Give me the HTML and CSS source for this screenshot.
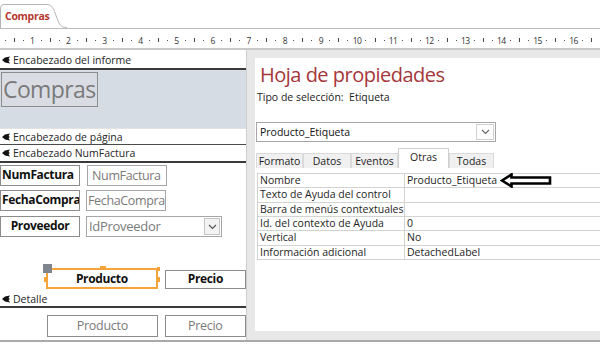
FILE: index.html
```html
<!DOCTYPE html>
<html lang="es">
<head>
<meta charset="utf-8">
<title>Compras</title>
<link rel="stylesheet" href="styles.css">
</head>
<body>
<div class="doctabs">
  <div class="doctab">
    <svg class="tabshape" width="68" height="24" viewBox="0 0 68 24"><path d="M0.5,24 V4 Q0.5,0.5 4,0.5 H46 C51,0.5 52.5,2.5 54.5,7.5 L58.5,18 C60,21.5 62,23.5 67,23.5" fill="#fff" stroke="#b4b4b4"/></svg>
    <span class="doctab-label">Compras</span>
  </div>
</div>
<div class="ruler">
  <div class="ruler-row">
    <div class="unit"><span class="num"></span><span class="dot"></span><span class="tick"></span><span class="dot"></span></div>
    <div class="unit"><span class="num">1</span><span class="dot"></span><span class="tick"></span><span class="dot"></span></div>
    <div class="unit"><span class="num">2</span><span class="dot"></span><span class="tick"></span><span class="dot"></span></div>
    <div class="unit"><span class="num">3</span><span class="dot"></span><span class="tick"></span><span class="dot"></span></div>
    <div class="unit"><span class="num">4</span><span class="dot"></span><span class="tick"></span><span class="dot"></span></div>
    <div class="unit"><span class="num">5</span><span class="dot"></span><span class="tick"></span><span class="dot"></span></div>
    <div class="unit"><span class="num">6</span><span class="dot"></span><span class="tick"></span><span class="dot"></span></div>
    <div class="unit"><span class="num">7</span><span class="dot"></span><span class="tick"></span><span class="dot"></span></div>
    <div class="unit"><span class="num">8</span><span class="dot"></span><span class="tick"></span><span class="dot"></span></div>
    <div class="unit"><span class="num">9</span><span class="dot"></span><span class="tick"></span><span class="dot"></span></div>
    <div class="unit"><span class="num">10</span><span class="dot"></span><span class="tick"></span><span class="dot"></span></div>
    <div class="unit"><span class="num">11</span><span class="dot"></span><span class="tick"></span><span class="dot"></span></div>
    <div class="unit"><span class="num">12</span><span class="dot"></span><span class="tick"></span><span class="dot"></span></div>
    <div class="unit"><span class="num">13</span><span class="dot"></span><span class="tick"></span><span class="dot"></span></div>
    <div class="unit"><span class="num">14</span><span class="dot"></span><span class="tick"></span><span class="dot"></span></div>
    <div class="unit"><span class="num">15</span><span class="dot"></span><span class="tick"></span><span class="dot"></span></div>
    <div class="unit"><span class="num">16</span><span class="dot"></span><span class="tick"></span><span class="dot"></span></div>
  </div>
</div>
<div class="workspace">
  <div class="design">
    <div class="secbar bar-report"><svg class="secicon" width="8" height="8" viewBox="0 0 8 8"><path d="M8,0.5 L3,1.5 L0,4 L3,6.5 L8,7.5 L6.5,5 L8,4 L6.5,3 Z" fill="#111"/></svg>Encabezado del informe</div>
    <div class="rpt-header"><div class="title-box">Compras</div></div>
    <div class="secbar bar-page"><svg class="secicon" width="8" height="8" viewBox="0 0 8 8"><path d="M8,0.5 L3,1.5 L0,4 L3,6.5 L8,7.5 L6.5,5 L8,4 L6.5,3 Z" fill="#111"/></svg>Encabezado de página</div>
    <div class="secbar bar-group"><svg class="secicon" width="8" height="8" viewBox="0 0 8 8"><path d="M8,0.5 L3,1.5 L0,4 L3,6.5 L8,7.5 L6.5,5 L8,4 L6.5,3 Z" fill="#111"/></svg>Encabezado NumFactura</div>
    <div class="grp">
      <div class="row row1"><div class="lbl lbl-left">NumFactura</div><div class="txt w80">NumFactura</div></div>
      <div class="row row2"><div class="lbl lbl-left">FechaCompra</div><div class="txt w80">FechaCompra</div></div>
      <div class="row row3"><div class="lbl lbl-center">Proveedor</div><div class="combo"><span class="combo-text">IdProveedor</span><span class="combo-btn"><svg width="9" height="6" viewBox="0 0 9 6"><path d="M1,1 L4.5,4.5 L8,1" fill="none" stroke="#555" stroke-width="1.2"/></svg></span></div></div>
      <div class="row row4">
        <div class="lbl sel">Producto<span class="h h-corner"></span><span class="h h-top"></span><span class="h h-left"></span><span class="h h-right"></span><span class="h h-topright"></span></div>
        <div class="lbl lbl-center precio">Precio</div>
      </div>
    </div>
    <div class="secbar bar-detail"><svg class="secicon" width="8" height="8" viewBox="0 0 8 8"><path d="M8,0.5 L3,1.5 L0,4 L3,6.5 L8,7.5 L6.5,5 L8,4 L6.5,3 Z" fill="#111"/></svg>Detalle</div>
    <div class="detail">
      <div class="dtxt d-prod">Producto</div>
      <div class="dtxt d-prec">Precio</div>
    </div>
  </div>
  <div class="props">
    <div class="props-inner">
      <h1 class="props-title">Hoja de propiedades</h1>
      <div class="seltype">Tipo de selección:&nbsp; Etiqueta</div>
      <div class="objsel"><span class="objsel-text">Producto_Etiqueta</span><span class="objsel-btn"><svg width="9" height="6" viewBox="0 0 9 6"><path d="M1,1 L4.5,4.5 L8,1" fill="none" stroke="#666" stroke-width="1.1"/></svg></span></div>
      <div class="ptabs">
        <div class="ptab t-formato">Formato</div>
        <div class="ptab t-datos">Datos</div>
        <div class="ptab t-eventos">Eventos</div>
        <div class="ptab t-otras active">Otras</div>
        <div class="ptab t-todas">Todas</div>
      </div>
      <div class="pgrid">
        <div class="pc">Nombre</div><div class="pc val">Producto_Etiqueta<svg class="arrow" width="52" height="15" viewBox="0 0 52 15"><path d="M2,7.5 L11.5,1.5 L11.5,4.5 L50,4.5 L50,10.5 L11.5,10.5 L11.5,13.5 Z" fill="#fff" stroke="#000" stroke-width="2.6" stroke-linejoin="miter"/></svg></div>
        <div class="pc">Texto de Ayuda del control</div><div class="pc val"></div>
        <div class="pc">Barra de menús contextuales</div><div class="pc val"></div>
        <div class="pc">Id. del contexto de Ayuda</div><div class="pc val">0</div>
        <div class="pc">Vertical</div><div class="pc val">No</div>
        <div class="pc">Información adicional</div><div class="pc val">DetachedLabel</div>
      </div>
    </div>
  </div>
</div>
</body>
</html>
```
FILE: styles.css
```css
* { box-sizing: border-box; }
html, body { margin: 0; padding: 0; }
body {
  width: 600px;
  height: 347px;
  overflow: hidden;
  background: #fff;
  font-family: "Open Sans", "Noto Sans", sans-serif;
  color: #1e1e1e;
}

/* document tab */
.doctabs {
  height: 29px;
  border-bottom: 1px solid #bcbcbc;
  padding-top: 4px;
}
.doctab {
  position: relative;
  width: 68px;
  height: 24px;
}
.tabshape { position: absolute; left: 0; top: 0; }
.doctab-label {
  position: relative;
  display: block;
  padding-left: 5px;
  line-height: 24px;
  font-size: 10.5px;
  font-weight: 700;
  color: #b5372f;
  letter-spacing: -0.3px;
}

/* ruler */
.ruler {
  height: 21px;
  padding-top: 3px;
  border-bottom: 2px solid #c9c9c9;
  overflow: hidden;
}
.ruler-row { display: flex; margin-left: -8.5px; width: 640px; }
.unit { display: flex; width: 36.1px; flex: none; }
.unit > span {
  flex: 1;
  height: 16px;
  display: flex;
  align-items: center;
  justify-content: center;
  font-size: 8.5px;
  color: #333;
  letter-spacing: -0.6px;
}
.dot::before { content: ""; width: 1px; height: 1px; background: #555; }
.tick::before { content: ""; width: 1px; height: 4px; background: #444; }

/* workspace */
.workspace {
  display: flex;
  height: 292px;
  border-bottom: 2px solid #a9a9a9;
}
.design {
  width: 246px;
  flex: none;
  overflow: hidden;
  display: flex;
  flex-direction: column;
}

.secbar {
  display: flex;
  align-items: center;
  gap: 3px;
  padding-left: 2px;
  font-size: 10.5px;
  color: #262626;
  background: #fff;
  white-space: nowrap;
}
.secicon { flex: none; }
.bar-report { height: 20px; padding-top: 2px; border-bottom: 2px solid #3a3a3a; }
.bar-page { height: 17px; border-top: 1px solid #e2e2e2; border-bottom: 1px solid #4a4a4a; }
.bar-group { height: 18px; border-bottom: 2px solid #3a3a3a; }
.bar-detail { height: 17px; padding-top: 1px; border-bottom: 2px solid #3a3a3a; }

.rpt-header {
  height: 58px;
  background: #d6dce4;
  padding: 2px 0 0 1px;
}
.title-box {
  width: 97px;
  height: 35px;
  border: 1px solid #8c8c8c;
  background: #d9dde3;
  font-size: 23px;
  line-height: 32px;
  color: #7a7a7a;
  padding-left: 1px;
  letter-spacing: -0.6px;
  white-space: nowrap;
  overflow: hidden;
}

.grp {
  height: 128px;
  padding-top: 2px;
  display: flex;
  flex-direction: column;
}
.row { display: flex; height: 21px; flex: none; }
.row2 { margin-top: 4px; }
.row3 { margin-top: 5px; }
.row4 { margin-top: 31px; padding-left: 46px; align-items: flex-end; }

.lbl {
  width: 80px;
  height: 21px;
  border: 1px solid #8c8c8c;
  background: #fff;
  font-size: 12px;
  font-weight: 700;
  color: #111;
  line-height: 17px;
  white-space: nowrap;
  overflow: hidden;
  letter-spacing: -0.35px;
}
.lbl-left { padding-left: 1px; }
.lbl-center { text-align: center; }
.txt {
  height: 21px;
  border: 1px solid #a6a6a6;
  font-size: 12.5px;
  color: #7a7a7a;
  line-height: 19px;
  padding-left: 4px;
  white-space: nowrap;
  overflow: hidden;
  letter-spacing: -0.35px;
}
.w80 { width: 80px; }
.row1 .txt { margin-left: 7px; }
.row2 .txt { margin-left: 6px; padding-left: 1px; }
.combo {
  margin-left: 6px;
  width: 136px;
  height: 21px;
  border: 1px solid #a6a6a6;
  display: flex;
  font-size: 13px;
  color: #7a7a7a;
  letter-spacing: -0.3px;
}
.combo-text { flex: 1; line-height: 19px; padding-left: 2px; }
.combo-btn {
  width: 16px;
  margin: 1px;
  border: 1px solid #c4c4c4;
  background: #f3f3f3;
  display: flex;
  align-items: center;
  justify-content: center;
}

.sel {
  position: relative;
  width: 114px;
  border: 2px solid #f5a33b;
  text-align: center;
  overflow: visible;
  line-height: 17px;
}
.h { position: absolute; background: #f5a33b; }
.h-corner { left: -5px; top: -6px; width: 9px; height: 9px; background: #7f868e; }
.h-top { left: 52px; top: -4px; width: 6px; height: 3px; }
.h-left { left: -4px; top: 7px; width: 3px; height: 5px; }
.h-right { right: -4px; top: 7px; width: 3px; height: 5px; }
.h-topright { right: -4px; top: -3px; width: 3px; height: 4px; }
.precio { width: 83px; height: 19px; margin-left: 7px; line-height: 16px; }

.detail { flex: 1; padding: 7px 0 0 47px; display: flex; gap: 7px; }
.dtxt {
  height: 22px;
  border: 1px solid #8c8c8c;
  font-size: 12.5px;
  color: #7a7a7a;
  text-align: center;
  line-height: 19px;
  letter-spacing: -0.3px;
}
.d-prod { width: 113px; }
.d-prec { width: 83px; }

/* property sheet */
.props {
  flex: 1;
  background: #e8e8e8;
  border-left: 1px solid #cdcdcd;
  padding: 8px 0 9px 8px;
  display: flex;
}
.props-inner {
  flex: 1;
  background: #fff;
  display: flex;
  flex-direction: column;
}
.props-title {
  margin: 4px 0 0 5px;
  font-size: 20px;
  font-weight: 400;
  line-height: 26px;
  color: #a4373a;
  letter-spacing: -0.5px;
  white-space: nowrap;
}
.seltype {
  margin: 2px 0 0 2px;
  font-size: 10.5px;
  line-height: 14px;
  color: #222;
}
.objsel {
  margin: 18px 0 0 1px;
  width: 240px;
  height: 20px;
  border: 1px solid #a6a6a6;
  display: flex;
}
.objsel-text { flex: 1; font-size: 10.5px; line-height: 18px; padding-left: 3px; color: #111; }
.objsel-btn {
  width: 18px;
  margin: 1px;
  border: 1px solid #cfcfcf;
  display: flex;
  align-items: center;
  justify-content: center;
}

.ptabs {
  margin: 6px 0 0 1px;
  height: 20px;
  display: flex;
  align-items: flex-end;
}
.ptab {
  height: 15px;
  background: #f0f0f0;
  border: 1px solid #dadada;
  border-bottom: none;
  font-size: 10.5px;
  line-height: 14px;
  text-align: center;
  color: #1e1e1e;
}
.t-formato { width: 47px; }
.t-datos { width: 48px; }
.t-eventos { width: 47px; }
.t-otras { width: 51px; }
.t-todas { width: 45px; }
.ptab.active { height: 20px; background: #fff; border-color: #cfcfcf; line-height: 17px; }

.pgrid {
  margin: 5px 0 0 2px;
  display: grid;
  grid-template-columns: 146px 1fr;
  grid-auto-rows: 13.33px;
  gap: 1px;
  background: #d3d3d3;
  border: 1px solid #d3d3d3;
  border-right: none;
}
.pc {
  background: #fff;
  font-size: 10.5px;
  line-height: 13px;
  padding-left: 2px;
  color: #1e1e1e;
  white-space: nowrap;
  display: flex;
  align-items: center;
}
.arrow { margin-left: 3px; flex: none; }
```
